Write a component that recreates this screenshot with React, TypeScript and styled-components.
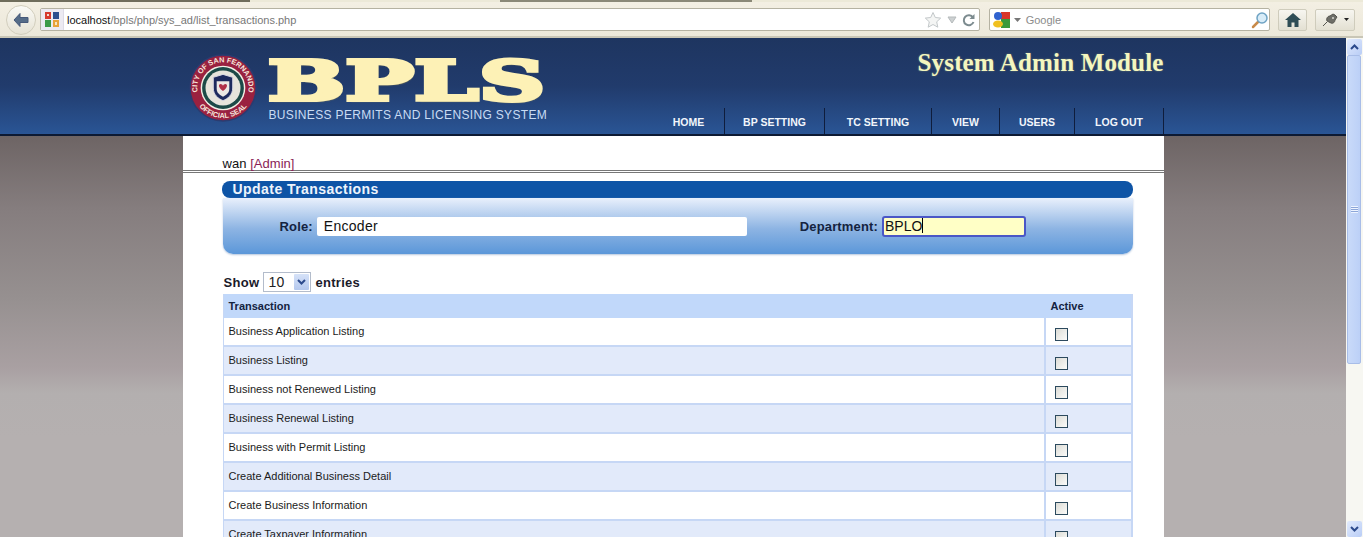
import React from 'react'
import styled, { createGlobalStyle } from 'styled-components'

const GlobalStyle = createGlobalStyle`
  html, body {
    margin: 0;
    height: 100%;
    overflow: hidden;
    font-family: "Liberation Sans", Arial, sans-serif;
  }
`

const Shell = styled.div`
  width: 1363px;
  height: 537px;
  display: flex;
  flex-direction: column;
  overflow: hidden;
`

const TabStrip = styled.div`
  height: 2px;
  display: flex;
  background: #ece9d8;
`

const TabEdge = styled.div<{ $width: number; $color: string }>`
  width: ${(p) => p.$width}px;
  background: ${(p) => p.$color};
`

const Toolbar = styled.div`
  height: 33px;
  padding: 1px 8px 0 6px;
  display: flex;
  align-items: center;
  gap: 8px;
  background: linear-gradient(#f3efe3, #ece8da);
  border-bottom: 2px solid #c9c6b6;
`

const BackButton = styled.div`
  width: 30px;
  height: 30px;
  margin-right: -4px;
  flex: none;
  display: flex;
  align-items: center;
  justify-content: center;
  border-radius: 50%;
  border: 1px solid #d2cebd;
  box-sizing: border-box;
  background: linear-gradient(#fafaf6, #e6e2d4);
`

const UrlBar = styled.div`
  width: 942px;
  height: 23px;
  box-sizing: border-box;
  display: flex;
  align-items: center;
  background: #fff;
  border: 1px solid #b5b2a2;
  border-radius: 2px;
  font-size: 11px;
`

const Favicon = styled.div`
  width: 23px;
  height: 21px;
  flex: none;
  display: flex;
  align-items: center;
  justify-content: center;
  box-sizing: border-box;
  background: #eceaf2;
  border-right: 1px solid #dddbe6;
`

const Url = styled.div`
  flex: 1;
  padding-left: 3px;
  color: #777;
`

const Host = styled.span`
  color: #111;
`

const UrlActions = styled.div`
  display: flex;
  align-items: center;
  gap: 5px;
  padding-right: 4px;
`

const SearchBar = styled.div`
  width: 282px;
  height: 23px;
  margin-left: 1px;
  box-sizing: border-box;
  display: flex;
  align-items: center;
  padding: 0 0 0 3px;
  gap: 3px;
  background: #fff;
  border: 1px solid #b5b2a2;
  border-radius: 2px;
`

const SearchHint = styled.div`
  flex: 1;
  padding-left: 2px;
  font-size: 11px;
  color: #8b8b8b;
`

const ToolButton = styled.div<{ $width: number }>`
  width: ${(p) => p.$width}px;
  height: 22px;
  flex: none;
  display: flex;
  align-items: center;
  justify-content: center;
  gap: 5px;
  box-sizing: border-box;
  border: 1px solid #cfccbc;
  border-radius: 2px;
  background: linear-gradient(#f7f6f0, #e3e0d2);
`

const Viewport = styled.div`
  height: 499px;
  display: flex;
`

const Page = styled.div`
  width: 1346px;
  overflow: hidden;
  background: linear-gradient(#6d6464 97px, #857d7e 170px, #969090 260px, #a9a0a2 330px, #b3afaf 355px, #b5b0b0 400px);
`

const Banner = styled.header`
  height: 96px;
  display: flex;
  justify-content: center;
  background: linear-gradient(#1e3560, #213b6c 50%, #2a5595);
  border-bottom: 2px solid #0d1a33;
`

const BannerInner = styled.div`
  width: 981px;
  display: flex;
  justify-content: space-between;
`

const Brand = styled.div`
  display: flex;
  align-items: flex-start;
  gap: 11px;
  padding: 16px 0 0 6px;
`

const Wordmark = styled.div`
  width: 280px;
`

const BigLetters = styled.div`
  height: 52px;
  width: 166px;
  margin-top: 2px;
  font-family: "DejaVu Serif", serif;
  font-weight: 700;
  font-size: 55px;
  line-height: 50px;
  letter-spacing: 0.5px;
  color: #fdf1b6;
  -webkit-text-stroke: 4px #fdf1b6;
  text-shadow: 1px 2px 1px #7f7a55;
  transform: scaleX(1.65);
  transform-origin: left top;
  white-space: nowrap;
`

const Tagline = styled.div`
  margin-left: 1px;
  font-size: 12px;
  line-height: 14px;
  color: #c9dcf4;
  letter-spacing: 0.34px;
  white-space: nowrap;
`

const BannerRight = styled.div`
  display: flex;
  flex-direction: column;
  align-items: flex-end;
`

const ModuleTitle = styled.div`
  height: 70px;
  padding-top: 10px;
  box-sizing: border-box;
  font-family: "Liberation Serif", serif;
  font-weight: 700;
  font-size: 25px;
  line-height: 30px;
  letter-spacing: 0.15px;
  color: #f4f6bf;
  text-shadow: 0 0 2px #6d7a70;
`

const Nav = styled.nav`
  display: flex;
  height: 26px;
`

const NavItem = styled.a<{ $width: number }>`
  width: ${(p) => p.$width}px;
  box-sizing: border-box;
  display: flex;
  align-items: center;
  justify-content: center;
  padding: 2px 0 0 1px;
  font-size: 10.5px;
  font-weight: 700;
  color: #f2f6fb;
  border-right: 1px solid #0f1d3c;
  white-space: nowrap;
`

const Sheet = styled.main`
  width: 981px;
  height: 401px;
  margin: 0 auto;
  box-sizing: border-box;
  padding: 21px 31px 0 39px;
  background: #fff;
`

const UserLine = styled.div`
  margin-left: 1px;
  font-size: 13px;
  line-height: 13px;
  letter-spacing: 0.04px;
  color: #111;
`

const RoleTag = styled.span`
  color: #8a1d55;
`

const Rule = styled.hr`
  height: 0;
  margin: 0 -31px 8px -39px;
  padding-bottom: 1px;
  border: 0;
  border-top: 1px solid #777;
  border-bottom: 1px solid #777;
`

const PanelTitle = styled.h2`
  height: 17px;
  margin: 0;
  padding-left: 11px;
  font-size: 14px;
  line-height: 17px;
  font-weight: 700;
  letter-spacing: 0.45px;
  color: #eef4fc;
  background: #0e54a6;
  border-radius: 8px;
`

const PanelBody = styled.div`
  height: 56px;
  margin-left: 1px;
  display: flex;
  align-items: center;
  padding: 0 0 0 57px;
  box-sizing: border-box;
  background: linear-gradient(#e9f0fc, #8db4e3 55%, #5b97d9);
  border-radius: 0 0 10px 10px;
  box-shadow: 0 1px 2px #b5c6de;
`

const FieldLabel = styled.label<{ $gap: number }>`
  margin-left: ${(p) => p.$gap}px;
  margin-right: 4px;
  font-size: 13px;
  font-weight: 700;
  color: #14233f;
  letter-spacing: 0.15px;
`

const FieldValue = styled.div`
  width: 430px;
  height: 19px;
  box-sizing: border-box;
  padding-left: 7px;
  font-size: 14px;
  line-height: 19px;
  letter-spacing: 0.3px;
  color: #111;
  background: #fff;
  border-radius: 2px;
`

const FocusedValue = styled.div`
  width: 144px;
  height: 21px;
  box-sizing: border-box;
  padding-left: 1px;
  font-size: 14px;
  line-height: 17px;
  color: #111;
  background: #ffffc6;
  border: 2px solid #4a57c6;
  border-radius: 3px;
`

const Caret = styled.span`
  display: inline-block;
  width: 1px;
  height: 15px;
  vertical-align: -2px;
  background: #000;
`

const LengthRow = styled.div`
  height: 22px;
  margin: 17px 0 1px 2px;
  display: flex;
  align-items: center;
  gap: 4px;
  font-size: 13px;
  font-weight: 700;
  letter-spacing: 0.3px;
  color: #1a1a2a;
`

const LengthSelect = styled.div`
  width: 48px;
  height: 20px;
  display: flex;
  align-items: center;
  justify-content: space-between;
  box-sizing: border-box;
  padding: 0 1px 0 4px;
  font-size: 14px;
  font-weight: 400;
  color: #222;
  background: #fff;
  border: 1px solid #b3bccb;
`

const SelectArrow = styled.span`
  width: 15px;
  height: 16px;
  display: flex;
  align-items: center;
  justify-content: center;
  background: linear-gradient(#d6e2f8, #b4c8ee);
  border-radius: 1px;
`

const Table = styled.div`
  margin-left: 1px;
  width: 910px;
`

const Row = styled.div<{ $tone: 'head' | 'odd' | 'even' }>`
  display: grid;
  grid-template-columns: 820px 1fr;
  height: ${(p) => (p.$tone === 'head' ? 24 : 29)}px;
  box-sizing: border-box;
  font-size: 11px;
  font-weight: ${(p) => (p.$tone === 'head' ? 700 : 400)};
  color: ${(p) => (p.$tone === 'head' ? '#14233f' : '#1b1b1b')};
  background: ${(p) =>
    p.$tone === 'head' ? '#c1d8fa' : p.$tone === 'even' ? '#e2eafa' : '#fff'};
  border-left: 1px solid #c6d7f5;
  border-right: 2px solid #c6d7f5;
  border-bottom: ${(p) => (p.$tone === 'head' ? '0' : '2px solid #c6d7f5')};
`

const NameCell = styled.div<{ $head?: boolean }>`
  padding: ${(p) => (p.$head ? '5px' : '6px')} 0 0 5px;
  white-space: nowrap;
  line-height: 14px;
`

const ActiveCell = styled.div<{ $head?: boolean }>`
  padding: ${(p) => (p.$head ? '5px 0 0 7px' : '10px 0 0 9px')};
  line-height: 14px;
  border-left: ${(p) => (p.$head ? '0' : '2px solid #c6d7f5')};
`

const Checkbox = styled.span`
  display: block;
  width: 13px;
  height: 13px;
  box-sizing: border-box;
  border: 1px solid #2c4a5e;
  background: linear-gradient(135deg, #dcdcd6, #fbfbf9);
`

const Scrollbar = styled.aside`
  width: 17px;
  display: flex;
  flex-direction: column;
  background: #f7f7f2;
`

const ScrollButton = styled.div`
  width: 15px;
  height: 16px;
  margin: 1px 1px 0;
  flex: none;
  display: flex;
  align-items: center;
  justify-content: center;
  border-radius: 2px;
  background: linear-gradient(135deg, #e2ebfd, #b9cdf6);
`

const ScrollThumb = styled.div`
  height: 309px;
  margin: 0 2px 0 1px;
  flex: none;
  display: flex;
  align-items: center;
  justify-content: center;
  box-sizing: border-box;
  border: 1px solid #a8bde8;
  border-radius: 2px;
  background: linear-gradient(90deg, #c9daf9, #bcd0f7);
`

const ScrollTrack = styled.div`
  flex: 1;
`

const Grip = styled.span`
  width: 7px;
  height: 7px;
  background: repeating-linear-gradient(#eef4ff 0 1px, #8da6d8 1px 2px);
`

const FourSquares = () => (
  <svg width="16" height="17" viewBox="0 0 16 17">
    <rect x="1" y="1" width="6" height="7" fill="#d63a2e" />
    <rect x="9" y="1" width="6" height="7" fill="#2b4f8f" />
    <rect x="1" y="9" width="6" height="7" fill="#3c9a48" />
    <rect x="9" y="9" width="6" height="7" fill="#e8a33a" />
    <rect x="3" y="3" width="2" height="2" fill="#f3d8d0" />
    <rect x="11" y="11" width="2" height="3" fill="#f7e4bf" />
  </svg>
)

const GoogleMark = () => (
  <svg width="18" height="18" viewBox="0 0 18 18">
    <rect x="8" y="1" width="9" height="7" fill="#d8352a" />
    <rect x="8" y="8" width="9" height="9" fill="#3a9a3c" />
    <circle cx="5" cy="5" r="4" fill="#2f62cf" />
    <ellipse cx="5" cy="13" rx="5" ry="3.5" fill="#f0c020" />
  </svg>
)

const Seal = () => (
  <svg width="68" height="68" viewBox="0 0 70 70">
    <defs>
      <path id="seal-top" d="M10.1 44.1a26.5 26.5 0 1 1 49.8 0" />
      <path id="seal-bottom" d="M8.2 50.5a31 31 0 0 0 53.6 0" />
    </defs>
    <circle cx="35" cy="35" r="34" fill="#9a2140" stroke="#2b3c70" strokeWidth="1.5" />
    <circle cx="35" cy="35" r="23" fill="#f2f0e6" />
    <circle cx="35" cy="35" r="21.5" fill="#1c4a48" />
    <circle cx="35" cy="35" r="18" fill="#e6e4dc" />
    <path d="M25 24l10-3 10 3v11c0 7-5 11-10 13-5-2-10-6-10-13z" fill="#1d2a5e" stroke="#d9d9e4" strokeWidth="1" />
    <path d="M28.5 28h13v8c0 4-3 6-6.5 8-3.5-2-6.5-4-6.5-8z" fill="#ece8e4" />
    <path d="M35 38c-5-3-5-7-2.5-7 1.2 0 2 .8 2.5 1.8.5-1 1.3-1.8 2.5-1.8 2.5 0 2.5 4-2.5 7z" fill="#b03048" />
    <text fontFamily="Liberation Sans, sans-serif" fontWeight="700" fontSize="7.5" fill="#f6e6dc">
      <textPath href="#seal-top" startOffset="50%" textAnchor="middle">CITY OF SAN FERNANDO</textPath>
    </text>
    <text fontFamily="Liberation Sans, sans-serif" fontWeight="700" fontSize="7.5" fill="#f6e6dc">
      <textPath href="#seal-bottom" startOffset="50%" textAnchor="middle">OFFICIAL SEAL</textPath>
    </text>
  </svg>
)

const rows = [
  'Business Application Listing',
  'Business Listing',
  'Business not Renewed Listing',
  'Business Renewal Listing',
  'Business with Permit Listing',
  'Create Additional Business Detail',
  'Create Business Information',
  'Create Taxpayer Information',
]

const navItems = [
  { label: 'HOME', width: 72 },
  { label: 'BP SETTING', width: 100 },
  { label: 'TC SETTING', width: 107 },
  { label: 'VIEW', width: 68 },
  { label: 'USERS', width: 75 },
  { label: 'LOG OUT', width: 89 },
]

const App: React.FC = () => (
  <Shell>
    <GlobalStyle />
    <TabStrip>
      <TabEdge $width={250} $color="#6f6d5c" />
      <TabEdge $width={250} $color="#ece9d8" />
      <TabEdge $width={252} $color="#8a8877" />
    </TabStrip>
    <Toolbar>
      <BackButton>
        <svg width="18" height="16" viewBox="0 0 18 16">
          <path d="M8 1.5L2 8l6 6.5V10.5h8v-5H8z" fill="#556c88" stroke="#46597a" strokeLinejoin="round" />
        </svg>
      </BackButton>
      <UrlBar>
        <Favicon>
          <FourSquares />
        </Favicon>
        <Url>
          <Host>localhost</Host>/bpls/php/sys_ad/list_transactions.php
        </Url>
        <UrlActions>
          <svg width="18" height="18" viewBox="0 0 18 18">
            <path d="M9 1.5l2.3 5 5.4.6-4 3.7 1.1 5.4L9 13.5l-4.8 2.7 1.1-5.4-4-3.7 5.4-.6z" fill="#f4f5f4" stroke="#c3c8ca" />
          </svg>
          <svg width="10" height="8" viewBox="0 0 10 8">
            <path d="M1 1h8L5 7z" fill="#cdd1d2" stroke="#b5babb" />
          </svg>
          <svg width="13" height="14" viewBox="0 0 13 14">
            <path d="M11 4.5A5 5 0 1 0 11.5 9" fill="none" stroke="#7c8b8f" strokeWidth="2" />
            <path d="M12.5 1v5h-5z" fill="#7c8b8f" />
          </svg>
        </UrlActions>
      </UrlBar>
      <SearchBar>
        <GoogleMark />
        <svg width="7" height="4" viewBox="0 0 7 4">
          <path d="M0 0h7L3.5 4z" fill="#777" />
        </svg>
        <SearchHint>Google</SearchHint>
        <svg width="18" height="18" viewBox="0 0 18 18">
          <path d="M7.5 10.5L2 16" stroke="#c88a4a" strokeWidth="2.5" strokeLinecap="round" />
          <circle cx="11" cy="7" r="5" fill="#d8ecf8" stroke="#6fa3c4" strokeWidth="1.5" />
        </svg>
      </SearchBar>
      <ToolButton $width={29}>
        <svg width="16" height="14" viewBox="0 0 16 14">
          <path d="M8 0L0 7h2.5v7h4V9.5h3V14h4V7H16z" fill="#2f4d55" />
        </svg>
      </ToolButton>
      <ToolButton $width={40}>
        <svg width="18" height="14" viewBox="0 0 18 14">
          <path d="M2 13l4-4M6 8c-1-3 1-5 3-5l3-2 2 1 2 2-2 3c0 2-2 4-4 3z" fill="#6e6e68" stroke="#55554f" />
          <circle cx="12" cy="5" r="1" fill="#d8d8d0" />
        </svg>
        <svg width="5" height="3" viewBox="0 0 5 3">
          <path d="M0 0h5L2.5 3z" fill="#222" />
        </svg>
      </ToolButton>
    </Toolbar>
    <Viewport>
      <Page>
        <Banner>
          <BannerInner>
            <Brand>
              <Seal />
              <Wordmark>
                <BigLetters>BPLS</BigLetters>
                <Tagline>BUSINESS PERMITS AND LICENSING SYSTEM</Tagline>
              </Wordmark>
            </Brand>
            <BannerRight>
              <ModuleTitle>System Admin Module</ModuleTitle>
              <Nav>
                {navItems.map((item) => (
                  <NavItem key={item.label} $width={item.width}>
                    {item.label}
                  </NavItem>
                ))}
              </Nav>
            </BannerRight>
          </BannerInner>
        </Banner>
        <Sheet>
          <UserLine>
            wan <RoleTag>[Admin]</RoleTag>
          </UserLine>
          <Rule />
          <PanelTitle>Update Transactions</PanelTitle>
          <PanelBody>
            <FieldLabel $gap={0}>Role:</FieldLabel>
            <FieldValue>Encoder</FieldValue>
            <FieldLabel $gap={53}>Department:</FieldLabel>
            <FocusedValue>
              BPLO
              <Caret />
            </FocusedValue>
          </PanelBody>
          <LengthRow>
            Show
            <LengthSelect>
              10
              <SelectArrow>
                <svg width="9" height="6" viewBox="0 0 9 6">
                  <path d="M1 1l3.5 3.5L8 1" fill="none" stroke="#2c4a8c" strokeWidth="2" />
                </svg>
              </SelectArrow>
            </LengthSelect>
            entries
          </LengthRow>
          <Table>
            <Row $tone="head">
              <NameCell $head>Transaction</NameCell>
              <ActiveCell $head>Active</ActiveCell>
            </Row>
            {rows.map((name, i) => (
              <Row key={name} $tone={i % 2 ? 'even' : 'odd'}>
                <NameCell>{name}</NameCell>
                <ActiveCell>
                  <Checkbox />
                </ActiveCell>
              </Row>
            ))}
          </Table>
        </Sheet>
      </Page>
      <Scrollbar>
        <ScrollButton>
          <svg width="9" height="6" viewBox="0 0 9 6">
            <path d="M1 5l3.5-3.5L8 5" fill="none" stroke="#2c4a8c" strokeWidth="2" />
          </svg>
        </ScrollButton>
        <ScrollThumb>
          <Grip />
        </ScrollThumb>
        <ScrollTrack />
        <ScrollButton>
          <svg width="9" height="6" viewBox="0 0 9 6">
            <path d="M1 1l3.5 3.5L8 1" fill="none" stroke="#2c4a8c" strokeWidth="2" />
          </svg>
        </ScrollButton>
      </Scrollbar>
    </Viewport>
  </Shell>
)

export default App
